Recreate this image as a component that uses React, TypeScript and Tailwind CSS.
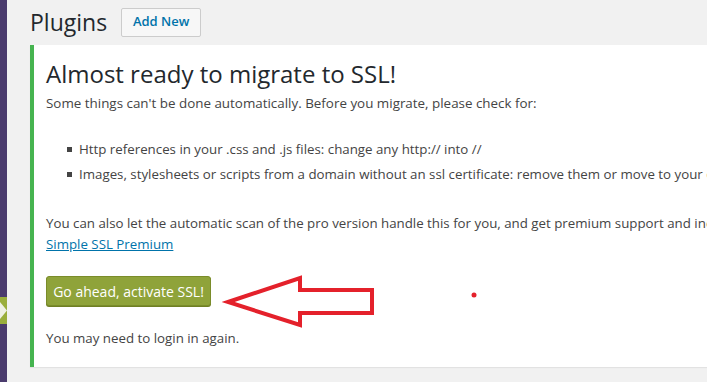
import React from "react";

const font = { fontFamily: '"Open Sans", "Noto Sans", sans-serif' };

function Sidebar() {
  return (
    <div className="flex w-[7px] shrink-0 flex-col bg-[#4a3b6d]">
      <div className="h-[297px]" />
      <div className="h-[27px] bg-[#9aae3c]">
        <svg width="7" height="27" viewBox="0 0 7 27">
          <polygon points="0,5 7,13.5 0,22" fill="#eef0e4" />
        </svg>
      </div>
    </div>
  );
}

function Arrow() {
  return (
    <svg
      className="pointer-events-none absolute left-0 top-0"
      width="707"
      height="382"
      viewBox="0 0 707 382"
    >
      <polygon
        points="228,302 300,278 300,290 372,290 372,313 300,313 300,325"
        fill="none"
        stroke="#e4212b"
        strokeWidth="4"
        strokeLinejoin="miter"
      />
      <circle cx="474" cy="295" r="2.5" fill="#e4212b" />
    </svg>
  );
}

export default function App() {
  return (
    <div
      className="relative flex h-[382px] w-[707px] overflow-hidden bg-[#f1f1f1] text-[#444]"
      style={font}
    >
      <Sidebar />
      <div className="flex min-w-0 flex-1 flex-col pl-[23px]">
        <div className="flex items-center gap-[14px] pt-[7px]">
          <h1 className="text-[23px] leading-[30px] font-normal text-[#23282d]">
            Plugins
          </h1>
          <button className="h-[29px] w-[80px] rounded-[2px] border border-[#cccccc] bg-[#f7f7f7] text-[13px] font-semibold text-[#0073aa]">
            Add New
          </button>
        </div>
        <div className="mt-[8px] h-[322px] w-[720px] shrink-0 border-l-4 border-[#46b450] bg-white pl-[12px] shadow-[0_1px_1px_rgba(0,0,0,0.06)]">
          <h2 className="pt-[13px] text-[24px] leading-[32px] font-normal text-[#23282d]">
            Almost ready to migrate to SSL!
          </h2>
          <p className="mt-[3px] whitespace-nowrap text-[13.4px] leading-[20px]">
            Some things can't be done automatically. Before you migrate, please check for:
          </p>
          <ul className="mt-[26px] flex flex-col gap-[5px] pl-[21px] text-[13.3px] leading-[20px]">
            <li className="flex items-center gap-[7px] whitespace-nowrap">
              <span className="h-[5px] w-[5px] shrink-0 bg-[#444]" />
              Http references in your .css and .js files: change any http:// into //
            </li>
            <li className="flex items-center gap-[7px] whitespace-nowrap">
              <span className="h-[5px] w-[5px] shrink-0 bg-[#444]" />
              Images, stylesheets or scripts from a domain without an ssl certificate: remove them or move to your own server.
            </li>
          </ul>
          <p className="mt-[29px] whitespace-nowrap text-[13.3px] leading-[21px]">
            You can also let the automatic scan of the pro version handle this for you, and get premium support and increased security with
          </p>
          <a className="block text-[13.3px] leading-[21px] text-[#0073aa] underline" href="#">
            Simple SSL Premium
          </a>
          <div className="mt-[21px]">
            <button className="h-[30px] w-[165px] rounded-[3px] border border-[#7a8c2a] bg-[#8fa33a] text-[14px] text-white shadow-[0_1px_0_#6f7f24]">
              Go ahead, activate SSL!
            </button>
          </div>
          <p className="mt-[22px] text-[13.3px] leading-[20px]">
            You may need to login in again.
          </p>
        </div>
      </div>
      <Arrow />
    </div>
  );
}
